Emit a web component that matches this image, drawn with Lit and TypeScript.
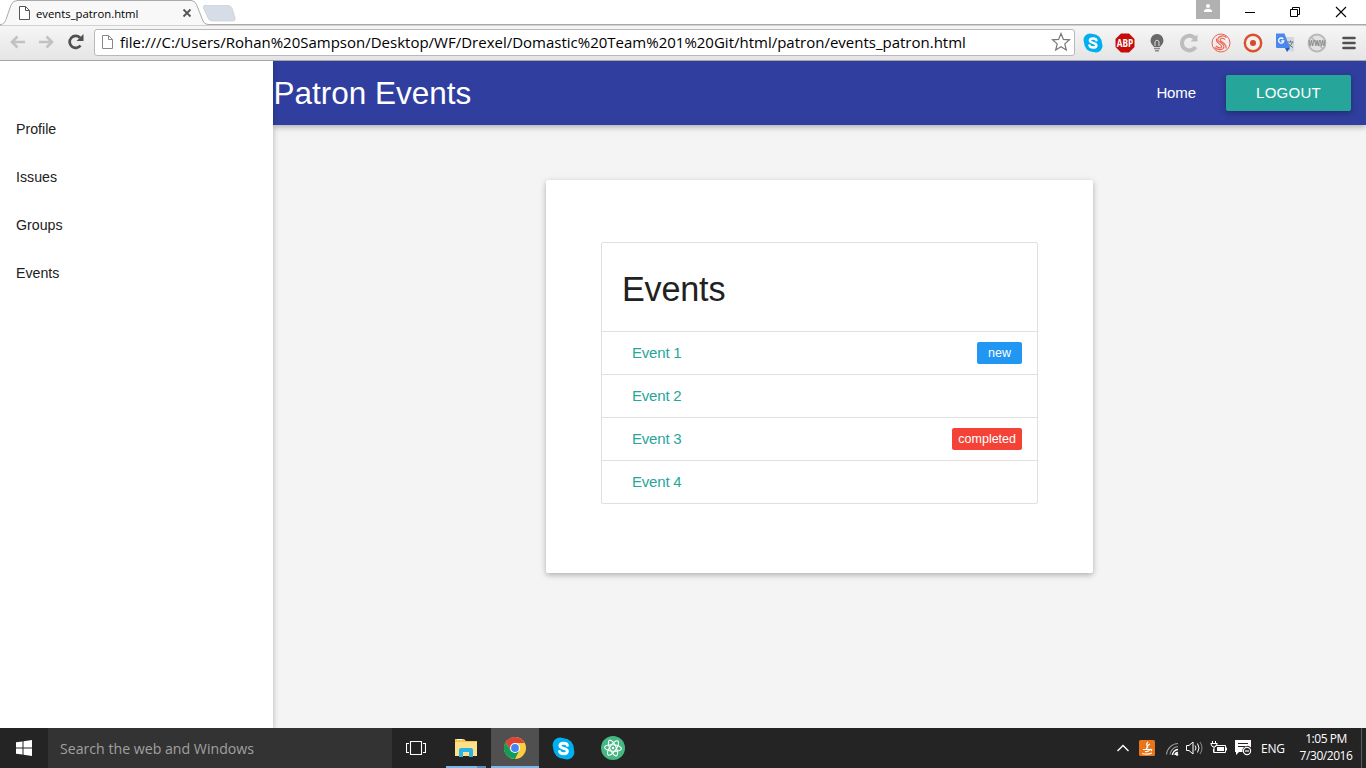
import { LitElement, html, css, svg } from "lit";
import { customElement } from "lit/decorators.js";

const page = (c: string) => svg`<path d="M1.5 .5H7.5L11.5 4.5V13.5H1.5Z" fill="#fff" stroke=${c}/><path d="M7.5 .5V4.5H11.5" fill="none" stroke=${c}/>`;
const skype = svg`<circle cx="7" cy="7" r="6.500" fill="#00aff0"/><circle cx="13" cy="13" r="6.500" fill="#00aff0"/><circle cx="10" cy="10" r="8.900" fill="#00aff0"/><path d="M13.400 7.200C12.800 4.900 7 4.700 6.900 7.600C6.800 10.400 13.500 9.300 13.400 12.300C13.200 15.400 7.200 15.100 6.500 12.500" fill="none" stroke="#fff" stroke-width="2.500" stroke-linecap="round"/>`;

@customElement("browser-chrome")
class BrowserChrome extends LitElement {
  static styles = css`
    :host { display: block; height: 61px; font-family: "Open Sans", "Noto Sans", sans-serif; color: #000; }
    svg { display: block; flex: none; }
    .tabs { height: 24px; display: flex; background: #fff; }
    .strip { position: relative; width: 1196px; height: 25px; display: flex; }
    .shape { position: absolute; left: 0; top: 0; }
    .tab { position: relative; display: flex; align-items: center; padding: 2px 0 0 18px; width: 174px; height: 22px; }
    .tab-title { font-size: 11.300px; margin-left: 6px; width: 146px; white-space: nowrap; }
    .controls { display: flex; }
    .toolbar { height: 36px; display: flex; align-items: center; background: linear-gradient(#f7f7f7, #e5e5e5); border-bottom: 1px solid #a6a6a6; }
    .nav { display: flex; padding-left: 9px; gap: 12px; width: 85px; }
    .box { box-sizing: border-box; width: 981px; height: 27px; border: 1px solid #b9b9b9; border-radius: 3px; background: #fff; display: flex; align-items: center; padding: 0 3px 0 6px; }
    .url { flex: 1; font-size: 15px; margin-left: 6px; white-space: nowrap; }
    .exts { display: flex; align-items: center; gap: 12px; margin-left: 8px; padding-top: 1px; }
  `;
  render() {
    return html`
      <div class="tabs">
        <div class="strip">
          <svg class="shape" width="1366" height="26">
            <path d="M0 24.500C4 24.500 5 22 6.500 18L11 5Q13 .5 17 .5H191Q195 .5 196.500 4.500L203 21Q204.500 24.500 208 24.500H1366V26H0Z" fill="#f8f8f8" stroke="#aaa"/>
            <path d="M204 5.500H228Q231 5.500 232 8L235 18Q236 21 232.500 21H212Q209 21 208 18L203.500 8Q203 5.500 205 5.500Z" fill="#d6dde6" stroke="#c9cdd3" stroke-width=".7"/>
          </svg>
          <div class="tab">
            <svg width="12" height="14">${page("#555")}</svg>
            <span class="tab-title">events_patron.html</span>
            <svg width="10" height="10"><path d="M1.500 1.500L8.500 8.500M8.500 1.500L1.500 8.500" stroke="#555" stroke-width="1.800"/></svg>
          </div>
        </div>
        <svg class="controls" width="170" height="24">
          <rect width="24" height="19" fill="#b1b1b1"/><circle cx="12" cy="6" r="2" fill="#fff"/><path d="M8 12V10.500Q9 8.800 12 8.800T16 10.500V12Z" fill="#fff"/>
          <path d="M49 12.500H59" stroke="#000"/>
          <path d="M94.500 9.500H101.500V16.500H94.500ZM96.500 9V7.500H103.500V14.500H102" fill="none" stroke="#000"/>
          <path d="M140 7L150 17M150 7L140 17" stroke="#000" stroke-width="1.100"/>
        </svg>
      </div>
      <div class="toolbar">
        <div class="nav">
          <svg width="17" height="18"><path d="M16 9H3M8.500 3.500L3 9L8.500 14.500" fill="none" stroke="#c2c2c2" stroke-width="2.600"/></svg>
          <svg width="17" height="18"><path d="M1 9H14M8.500 3.500L14 9L8.500 14.500" fill="none" stroke="#c2c2c2" stroke-width="2.600"/></svg>
          <svg width="18" height="18"><path d="M13.500 12.500A6 6 0 1 1 13 4.800" fill="none" stroke="#505050" stroke-width="2.700"/><path d="M16.500 1V8H9.500Z" fill="#505050"/></svg>
        </div>
        <div class="box">
          <svg width="13" height="15">${page("#888")}</svg>
          <span class="url">file:///C:/Users/Rohan%20Sampson/Desktop/WF/Drexel/Domastic%20Team%201%20Git/html/patron/events_patron.html</span>
          <svg width="20" height="20" viewBox="0 0 20 20"><path d="M10 1.500L12.400 7.400L18.500 7.800L13.800 11.900L15.300 18L10 14.700L4.700 18L6.200 11.900L1.500 7.800L7.600 7.400Z" fill="#fff" stroke="#777" stroke-width="1.200"/></svg>
        </div>
        <div class="exts">
          <svg width="20" height="20" viewBox="0 0 20 20">${skype}</svg>
          <svg width="20" height="20" viewBox="0 0 20 20"><path d="M6 .5H14L19.500 6V14L14 19.500H6L.5 14V6Z" fill="#c70d0a"/><text x="10" y="13.800" text-anchor="middle" font-size="10.500" font-weight="700" textLength="16.500" lengthAdjust="spacingAndGlyphs" fill="#fff">ABP</text></svg>
          <svg width="20" height="20" viewBox="0 0 20 20"><path d="M10 1A6.500 6.500 0 0 0 5 11.500L7 14H13L15 11.500A6.500 6.500 0 0 0 10 1Z" fill="#686868"/><path d="M8 13V8.500Q10 5.500 12 8.500V13" fill="none" stroke="#ddd"/><path d="M7 15.500H13M8 17.800H12" stroke="#888" stroke-width="1.500"/></svg>
          <svg width="20" height="20" viewBox="0 0 20 20"><path d="M16.500 14A7.300 7.300 0 1 1 16 5.500" fill="none" stroke="#bdbdbd" stroke-width="4"/><path d="M18.500 1.500V8.500H11.500Z" fill="#bdbdbd"/></svg>
          <svg width="20" height="20" viewBox="0 0 20 20"><g fill="none" stroke="#ef6350"><circle cx="10" cy="10" r="9" stroke-width="1"/><path d="M15.500 4.500C12 1 5.500 4 7 7.500C8.500 10 13 10 13 13.500C12.500 17.500 7 17.500 3.500 14.500M14 6.500C11 4 8 6 9.500 8C12 10 16 11 15 15.500M5 13C8 16 11.500 15 10.500 13C9 10.500 4.500 10 5.500 5.500" stroke-width="1.100"/></g></svg>
          <svg width="20" height="20" viewBox="0 0 20 20"><circle cx="10" cy="10" r="8.200" fill="#f6eeea" stroke="#d9502f" stroke-width="2.400"/><circle cx="10" cy="10" r="3" fill="#d14a2b"/></svg>
          <svg width="20" height="20" viewBox="0 0 20 20"><path d="M8 4H19V18.500H12Z" fill="#d5d7da"/><path d="M1 .5H9.500L15 15H2Q1 15 1 14Z" fill="#4a87ee"/><path d="M10 15H15L12 19Z" fill="#2a56c6"/><path d="M8.300 6A2.600 2.600 0 1 0 8.800 8H6.300" fill="none" stroke="#fff" stroke-width="1.300"/><path d="M12.500 9H18.500M15.500 7.500V9M17.500 9Q16.500 12.500 13.500 14M13.500 10.500Q15 13 18 14.500" fill="none" stroke="#607d8b"/></svg>
          <svg width="20" height="20" viewBox="0 0 20 20"><circle cx="10" cy="10" r="8.500" fill="#e2e2e2" stroke="#b8b8b8" stroke-width="1.800"/><path d="M4 4L16 16" stroke="#b8b8b8" stroke-width="1.600"/><text x="10" y="13" text-anchor="middle" font-size="8" font-weight="700" textLength="17" lengthAdjust="spacingAndGlyphs" fill="#858585">WWW</text></svg>
          <svg width="20" height="20" viewBox="0 0 20 20"><path d="M4.500 5H15.500M4.500 10H15.500M4.500 15H15.500" stroke="#505050" stroke-width="2.600" stroke-linecap="round"/></svg>
        </div>
      </div>`;
  }
}

@customElement("patron-page")
class PatronPage extends LitElement {
  static styles = css`
    :host { display: flex; height: 667px; overflow: hidden; background: #f4f4f4; color: #212121; font: 15px/22.5px "Liberation Sans", Arial, sans-serif; }
    .side { position: relative; z-index: 2; box-sizing: border-box; width: 273px; padding-top: 44px; background: #fff; box-shadow: 0 2px 5px rgba(0,0,0,.16), 0 2px 8px rgba(0,0,0,.12); font-size: 14.200px; }
    .side div { height: 48px; line-height: 48px; padding-left: 16px; }
    .main { flex: 1; display: flex; flex-direction: column; }
    .bar { box-sizing: border-box; height: 64px; width: 1093px; display: flex; align-items: center; padding-right: 15px; background: #303f9f; color: #fff; box-shadow: 0 2px 5px rgba(0,0,0,.18), 0 2px 8px rgba(0,0,0,.12); }
    .brand { font-size: 31.500px; flex: 1; line-height: 64px; padding-left: .5px; }
    .home { letter-spacing: -.1px; }
    .logout { box-sizing: border-box; width: 125px; height: 36px; margin-left: 30px; border-radius: 2px; background: #26a69a; line-height: 36px; text-align: center; letter-spacing: .25px; box-shadow: 0 2px 5px rgba(0,0,0,.2), 0 2px 8px rgba(0,0,0,.14); }
    .card { box-sizing: border-box; width: 547px; height: 393px; margin: 55px 0 0 273px; padding: 62px 55px; background: #fff; border-radius: 2px; box-shadow: 0 2px 5px rgba(0,0,0,.18), 0 2px 8px rgba(0,0,0,.12); }
    .list { border: 1px solid #e0e0e0; border-radius: 2px; }
    .head { height: 88px; padding-left: 20px; font-size: 34.200px; line-height: 92px; letter-spacing: -.2px; }
    .row { height: 42px; border-top: 1px solid #e0e0e0; display: flex; align-items: center; justify-content: space-between; padding: 0 15px 0 30px; color: #26a69a; }
    .name { letter-spacing: -.2px; }
    .badge { box-sizing: border-box; height: 22px; min-width: 45px; padding: 0 6px; border-radius: 2px; color: #fff; font-size: 12.500px; line-height: 22.500px; text-align: center; }
    .new { background: #2196f3; }
    .completed { background: #f44336; }
  `;
  render() {
    const events = [["Event 1", "new"], ["Event 2", ""], ["Event 3", "completed"], ["Event 4", ""]];
    return html`
      <nav class="side">${["Profile", "Issues", "Groups", "Events"].map(t => html`<div>${t}</div>`)}</nav>
      <div class="main">
        <header class="bar"><span class="brand">Patron Events</span><span class="home">Home</span><span class="logout">LOGOUT</span></header>
        <section class="card"><div class="list">
          <div class="head">Events</div>
          ${events.map(([name, state]) => html`<div class="row"><span class="name">${name}</span>${state ? html`<span class="badge ${state}">${state}</span>` : ""}</div>`)}
        </div></section>
      </div>`;
  }
}

@customElement("task-bar")
class TaskBar extends LitElement {
  static styles = css`
    :host { display: flex; height: 40px; background: #242424; color: #fff; font-family: "Open Sans", "Noto Sans", sans-serif; }
    svg { display: block; }
    .cell { width: 49px; height: 40px; display: flex; align-items: center; justify-content: center; flex: none; box-sizing: border-box; }
    .start { width: 48px; }
    .search { width: 332px; padding-left: 12px; background: #333; color: #a0a0a0; font-size: 14.150px; line-height: 41px; white-space: nowrap; }
    .view { padding-right: 2px; }
    .files { width: 50px; padding-right: 1px; background: linear-gradient(#76b9ed, #76b9ed) 5px 38px / 31px 2px no-repeat, linear-gradient(#5a8fba, #5a8fba) 36px 38px / 9px 2px no-repeat; }
    .active { width: 48px; background: #505050; border-bottom: 2px solid #76b9ed; padding-top: 2px; }
    .tray { margin-left: auto; display: flex; align-items: center; font-size: 12px; }
    .lang { width: 32px; white-space: nowrap; letter-spacing: -.2px; }
    .clock { width: 66px; font-size: 12px; line-height: 17px; text-align: center; letter-spacing: -.450px; white-space: nowrap; margin-top: -2px; }
    .peek { width: 4px; height: 40px; margin-left: 2px; border-left: 1px solid #5b5b5b; }
  `;
  render() {
    return html`
      <div class="cell start"><svg width="16" height="16"><path d="M0 2.300L6.500 1.400V7.500H0ZM7.500 1.200L16 0V7.500H7.500ZM0 8.500H6.500V14.600L0 13.700ZM7.500 8.500H16V16L7.500 14.800Z" fill="#fff"/></svg></div>
      <div class="search">Search the web and Windows</div>
      <div class="cell view"><svg width="20" height="16"><path d="M4.500 1.500H15.500V14.500H4.500ZM3 3.500H.5V12.500H3M17 3.500H19.500V12.500H17" fill="none" stroke="#fff" stroke-width="1.100"/></svg></div>
      <div class="cell files"><svg width="22" height="20"><path d="M0 1H9L11 3H22V18H0Z" fill="#f3c64f"/><path d="M1 4H22V18H0V5Z" fill="#ffe08a"/><path d="M2 1.500H7" stroke="#fff" stroke-width="1"/><path d="M4 19V12Q4 10 6 10H16Q18 10 18 12V19H14V14H8V19Z" fill="#27b4e9"/></svg></div>
      <div class="cell active"><svg width="22" height="22" viewBox="0 0 22 22"><circle cx="11" cy="11" r="11" fill="#ffcd40"/><path d="M11 0A11 11 0 0 1 20.500 6H11L6.700 13.500L1.500 5.500A11 11 0 0 1 11 0Z" fill="#db4437"/><path d="M1.470 5.500A11 11 0 0 0 11 22L15.300 13.500L6.700 13.500Z" fill="#0f9d58"/><circle cx="11" cy="11" r="5" fill="#fff"/><circle cx="11" cy="11" r="3.900" fill="#4285f4"/></svg></div>
      <div class="cell"><svg width="23" height="23" viewBox="0 0 20 20">${skype}</svg></div>
      <div class="cell"><svg width="24" height="24" viewBox="0 0 24 24"><circle cx="12" cy="12" r="12" fill="#45b984"/><g fill="none" stroke="#fff" stroke-width="1.100"><ellipse cx="12" cy="12" rx="3.200" ry="8.500" transform="rotate(-25 12 12)"/><ellipse cx="12" cy="12" rx="3.200" ry="8.500" transform="rotate(35 12 12)"/><ellipse cx="12" cy="12" rx="3.200" ry="8.500" transform="rotate(95 12 12)"/></g><circle cx="12" cy="12" r="1.300" fill="#fff"/></svg></div>
      <div class="tray">
        <svg width="145" height="40">
          <path d="M1.500 23L7 17.500L12.500 23" fill="none" stroke="#fff" stroke-width="1.400"/>
          <rect x="23" y="12" width="16" height="16" rx="1.500" fill="#e8751a"/><path d="M32 14C28 17 34 18 30 21M34 16Q30 18 32 20M27 21.500H34Q33 24 29 23.500M34 21.500Q37 21 35 23M26 25.500Q31 27 36 25" fill="none" stroke="#fff" stroke-width="1.100"/>
          <g fill="none"><path d="M50.500 26.500A12 12 0 0 1 62 15.500M54 26.500A9 9 0 0 1 62 18.500" stroke="#999" stroke-width="1.200"/><path d="M56.500 27A6 6 0 0 1 62 21.500M59 27A3 3 0 0 1 62 24.500" stroke="#fff" stroke-width="1.500"/></g><circle cx="61" cy="26.500" r="1.300" fill="#fff"/>
          <path d="M70.500 17.500H73L77 14V26L73 22.500H70.500Z" fill="none" stroke="#fff"/><path d="M79 17.500Q81 20 79 22.500M81.500 15.500Q84.500 20 81.500 24.500" fill="none" stroke="#fff"/><path d="M84 14Q88 20 84 26" fill="none" stroke="#888"/>
          <path d="M99.500 17.500H109.500V24.500H97.500V21M110.500 19.500V22.500" fill="none" stroke="#fff"/><rect x="101" y="19" width="7" height="4" fill="#fff"/><path d="M96.500 13V15M99.500 13V15M94.500 15.500H101.500M95 16Q95.500 19 98 19T101 16M98 19V24" fill="none" stroke="#fff"/>
          <path d="M119 12H135V19.500A5 5 0 0 0 126.500 24H123L120 27V24H119Z" fill="#fff"/><path d="M122 15.500H132M122 18.500H129" stroke="#242424"/><circle cx="131" cy="23" r="3.600" fill="#242424" stroke="#fff" stroke-width="1.200"/><path d="M129 23H133" stroke="#fff" stroke-width="1.200"/>
        </svg>
        <span class="lang">ENG</span>
        <div class="clock">1:05 PM<br>7/30/2016</div>
        <div class="peek"></div>
      </div>`;
  }
}

@customElement("app-root")
class AppRoot extends LitElement {
  static styles = css`:host { display: block; width: 1366px; height: 768px; overflow: hidden; }`;
  render() {
    return html`<browser-chrome></browser-chrome><patron-page></patron-page><task-bar></task-bar>`;
  }
}
